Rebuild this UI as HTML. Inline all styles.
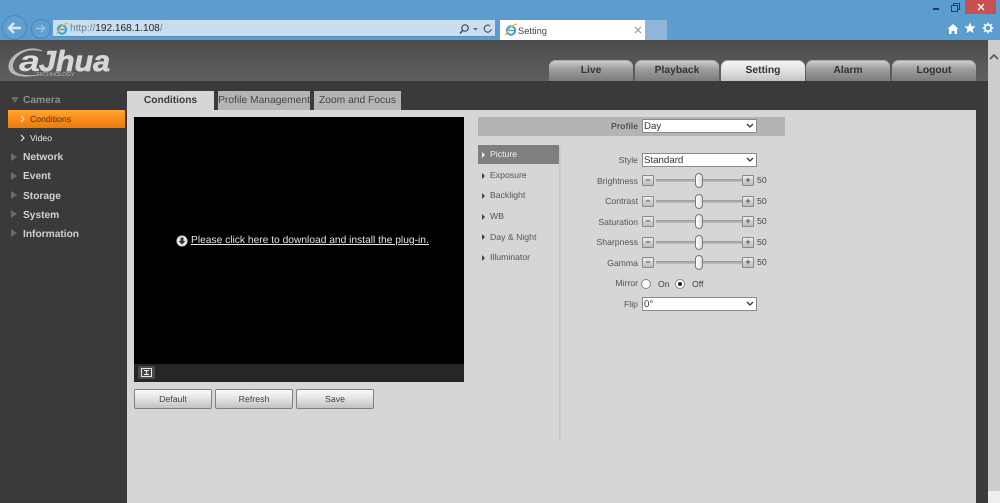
<!DOCTYPE html>
<html><head><meta charset="utf-8"><title>Setting</title>
<style>
html,body{margin:0;padding:0;width:1000px;height:503px;overflow:hidden;background:#3a3a3a}
body{position:relative;font-family:"Liberation Sans",sans-serif;font-size:10px;color:#444;text-rendering:geometricPrecision;filter:blur(.3px)}
div,span,a,svg{position:absolute}
.t{white-space:nowrap;line-height:12px}
.nt{background:linear-gradient(#d4d4d4,#a0a0a0 40%,#7c7c7c);border-radius:7px 7px 0 0;top:60px;height:21px;width:84px;text-align:center;font:bold 10.3px/22px "Liberation Sans",sans-serif;color:#333;box-shadow:inset 0 1px 0 #aaa}
.side{left:23px;font:bold 10.2px/12px "Liberation Sans",sans-serif;color:#d0d0d0;white-space:nowrap}
.arr{left:11px;width:0;height:0;border-left:6px solid #6a6a6a;border-top:4px solid transparent;border-bottom:4px solid transparent}
.tab{top:91px;height:19px;background:#b5b5b5;font:10.27px/20px "Liberation Sans",sans-serif;color:#444;text-align:center;white-space:nowrap;overflow:hidden}
.btn{top:389px;width:76px;height:18px;border:1px solid #808080;border-radius:2px;background:linear-gradient(#fafafa,#e8e8e8 40%,#c2c2c2);text-align:center;font:8.8px/18px "Liberation Sans",sans-serif;color:#444}
.m{left:490px;font:8.7px/12px "Liberation Sans",sans-serif;color:#555;white-space:nowrap}
.tri{left:482px;width:0;height:0;border-left:3px solid #444;border-top:3px solid transparent;border-bottom:3px solid transparent}
.lbl{right:362px;font:8.7px/12px "Liberation Sans",sans-serif;color:#555;white-space:nowrap;text-align:right}
.sel{left:642px;height:12px;background:#fff;border:1px solid #8a8a8a;font:9.7px/13px "Liberation Sans",sans-serif;color:#333;padding-left:1px;width:112px}
.sel svg{right:2px;top:3px}
.pm{width:10px;height:9px;border:1px solid #8a8a8a;border-radius:1px;background:linear-gradient(#eee,#bbb);font:bold 9px/8px "Liberation Sans",sans-serif;color:#555;text-align:center}
.track{left:656px;width:86px;height:3px;background:linear-gradient(#9a9a9a,#c0c0c0)}
.knob{left:695px;width:6px;height:13px;background:linear-gradient(90deg,#fff,#ddd);border:1px solid #777;border-radius:4px}
.v{left:757px;font:8.7px/12px "Liberation Sans",sans-serif;color:#444}
</style></head><body>
<!-- browser chrome -->
<div style="left:0;top:0;width:1000px;height:40px;background:#5c9dd0"></div>
<div style="left:2px;top:15px;width:23px;height:23px;border-radius:50%;border:1px solid #4a85b5;background:#5f9fd2"></div>
<svg style="left:6px;top:21px" width="16" height="14" viewBox="0 0 16 14"><path d="M15 7H3M8 2L3 7l5 5" fill="none" stroke="#dce9f4" stroke-width="2.4"/></svg>
<div style="left:31px;top:19px;width:18px;height:18px;border-radius:50%;border:1px solid #4a85b5;background:#5f9fd2"></div>
<svg style="left:35px;top:23px" width="11" height="11" viewBox="0 0 11 11"><path d="M1 5.500h8M6 2l3.500 3.500L6 9" fill="none" stroke="#a0c6e4" stroke-width="1.400"/></svg>
<div style="left:53px;top:20px;width:442px;height:16px;background:#c9def0;border-bottom:1px solid #4f8fc2"></div>
<svg style="left:55px;top:22px" width="14" height="14" viewBox="0 0 14 14"><circle cx="7" cy="7.500" r="4.200" fill="none" stroke="#3f9fdc" stroke-width="2"/><path d="M3 7.500h8" stroke="#3f9fdc" stroke-width="1.400"/><path d="M1.500 12.500C4 6 8 2 13 1" fill="none" stroke="#e8b93c" stroke-width="1.400"/></svg>
<div class="t" style="left:70px;top:23px;font-size:10.1px;color:#667"><span style="position:static;color:#6d7f8f">http://</span><span style="position:static;color:#222">192.168.1.108</span><span style="position:static;color:#6d7f8f">/</span></div>
<svg style="left:459px;top:23px" width="36" height="12" viewBox="0 0 36 12"><circle cx="6" cy="5" r="3.200" fill="none" stroke="#445" stroke-width="1.200"/><path d="M3.500 7.500L1 10.500" stroke="#445" stroke-width="1.400"/><path d="M14 5h5l-2.500 2.500z" fill="#667"/><path d="M31 3a3.500 3.500 0 1 0 1.200 3" fill="none" stroke="#556" stroke-width="1.200"/></svg>
<div style="left:500px;top:20px;width:145px;height:20px;background:#fff"></div>
<svg style="left:504px;top:23px" width="14" height="14" viewBox="0 0 14 14"><circle cx="7" cy="7.500" r="4.200" fill="none" stroke="#3f9fdc" stroke-width="2"/><path d="M3 7.500h8" stroke="#3f9fdc" stroke-width="1.400"/><path d="M1.500 12.500C4 6 8 2 13 1" fill="none" stroke="#e8b93c" stroke-width="1.400"/></svg>
<div class="t" style="left:518px;top:25px;font-size:9.3px;color:#444">Setting</div>
<svg style="left:634px;top:26px" width="8" height="8" viewBox="0 0 8 8"><path d="M1 1l6 6M7 1L1 7" stroke="#999" stroke-width="1.200"/></svg>
<div style="left:645px;top:20px;width:22px;height:20px;background:#8fb6d6"></div>
<div style="left:933px;top:8px;width:6px;height:2px;background:#2d3e4e"></div>
<svg style="left:951px;top:3px" width="9" height="9" viewBox="0 0 9 9"><rect x=".5" y="2.500" width="6" height="6" fill="none" stroke="#2d3e4e"/><path d="M2.500 2V.5h6v6H7" fill="none" stroke="#2d3e4e"/></svg>
<div style="left:965px;top:0;width:31px;height:14px;background:#c75050"></div>
<svg style="left:977px;top:3px" width="8" height="8" viewBox="0 0 8 8"><path d="M1 1l6 6M7 1L1 7" stroke="#fff" stroke-width="1.300"/></svg>
<svg style="left:947px;top:23px" width="12" height="12" viewBox="0 0 12 12"><path d="M6 1L.5 6H2v5h2.500V8h3v3H10V6h1.500z" fill="#fff"/></svg>
<svg style="left:964px;top:22px" width="12" height="12" viewBox="0 0 12 12"><path d="M6 .5l1.600 3.700 4 .3-3 2.600.9 3.900L6 8.900 2.500 11l.9-3.900-3-2.600 4-.3z" fill="#fff"/></svg>
<svg style="left:982px;top:22px" width="12" height="12" viewBox="0 0 12 12"><circle cx="6" cy="6" r="3.200" fill="none" stroke="#fff" stroke-width="1.600"/><path d="M6 .5v2M6 9.500v2M.5 6h2M9.500 6h2M2.100 2.100l1.400 1.400M8.500 8.500l1.400 1.400M9.900 2.100L8.500 3.500M3.500 8.500L2.100 9.900" stroke="#fff" stroke-width="1.400"/></svg>

<!-- header -->
<div style="left:0;top:40px;width:988px;height:41px;background:linear-gradient(#4c4c4c,#5f5f5f)"></div>
<svg style="left:6px;top:44px" width="110" height="36" viewBox="0 0 110 36">
<path d="M36 6.500C33 5 28 4 24 4.500 12 6 3 14 2.500 22 2 29 9 32 17 32.500c7 .4 14-.5 20-2.500-6 1-12 1.500-17 1-7-.6-13-3-13-9 0-7 8-14.500 17-15.500 4-.4 9 0 12 1z" fill="#b8b8b8"/>
<text x="13" y="27" font-family="Liberation Sans" font-size="29" font-weight="bold" font-style="italic" fill="#dedede" textLength="21" lengthAdjust="spacingAndGlyphs">a</text>
<text x="33" y="27" font-family="Liberation Sans" font-size="29" font-weight="bold" font-style="italic" fill="#d6d6d6" stroke="#d6d6d6" stroke-width=".7" textLength="71" lengthAdjust="spacingAndGlyphs">Jhua</text>
</svg>
<div class="t" style="left:36px;top:72px;font-size:5.5px;line-height:7px;color:#b8b8b8">TECHNOLOGY</div>
<div class="nt" style="left:549px">Live</div>
<div class="nt" style="left:635px">Playback</div>
<div class="nt" style="left:721px;background:linear-gradient(#f8f8f8,#dcdcdc 60%,#c4c4c4)">Setting</div>
<div class="nt" style="left:806px">Alarm</div>
<div class="nt" style="left:892px">Logout</div>

<!-- scrollbar -->
<div style="left:988px;top:40px;width:12px;height:451px;background:#cdcdcd"></div>
<div style="left:988px;top:491px;width:12px;height:12px;background:#eeeeee"></div>
<svg style="left:989px;top:53px" width="10" height="7" viewBox="0 0 10 7"><path d="M1 6l4-4 4 4" fill="none" stroke="#555" stroke-width="1.600"/></svg>

<!-- sidebar -->
<div style="left:11px;top:97px;width:0;height:0;border-top:6px solid #6a6a6a;border-left:4px solid transparent;border-right:4px solid transparent"></div>
<div class="side" style="top:95px;color:#8f8f8f">Camera</div>
<div style="left:8px;top:110px;width:117px;height:18px;background:linear-gradient(#ffa63a,#f98a14 55%,#e87d10)"></div>
<svg style="left:20px;top:115px" width="6" height="8" viewBox="0 0 6 8"><path d="M1 1l3 3-3 3" fill="none" stroke="#fff0d8" stroke-width="1.100"/></svg>
<div class="t" style="left:30px;top:113px;font-size:8.7px;color:#4a3320">Conditions</div>
<svg style="left:20px;top:134px" width="6" height="8" viewBox="0 0 6 8"><path d="M1 1l3 3-3 3" fill="none" stroke="#eee" stroke-width="1.100"/></svg>
<div class="t" style="left:30px;top:132px;font-size:8.7px;color:#e6e6e6">Video</div>
<div class="arr" style="top:153px"></div><div class="side" style="top:152px">Network</div>
<div class="arr" style="top:172px"></div><div class="side" style="top:171px">Event</div>
<div class="arr" style="top:191px"></div><div class="side" style="top:191px">Storage</div>
<div class="arr" style="top:210px"></div><div class="side" style="top:210px">System</div>
<div class="arr" style="top:229px"></div><div class="side" style="top:229px">Information</div>

<!-- tabs -->
<div class="tab" style="left:127px;width:87px;background:#d6d6d6;font-weight:bold;font-size:10.2px;color:#3c3c3c">Conditions</div>
<div class="tab" style="left:218px;width:92px">Profile Management</div>
<div class="tab" style="left:314px;width:87px">Zoom and Focus</div>

<!-- content -->
<div style="left:127px;top:110px;width:849px;height:393px;background:#d6d6d6"></div>
<div style="left:134px;top:117px;width:330px;height:247px;background:#000"></div>
<div style="left:134px;top:364px;width:330px;height:18px;background:#262626"></div>
<div style="left:138px;top:366px;width:17px;height:13px;background:#4a4a4a;border-radius:1px"></div>
<svg style="left:141px;top:368px" width="11" height="9" viewBox="0 0 11 9"><rect x=".5" y=".5" width="10" height="8" fill="none" stroke="#e8e8e8"/><path d="M3 2.500h5M3 6.500h5M5.500 2v5" stroke="#e8e8e8"/></svg>
<svg style="left:176px;top:235px" width="12" height="12" viewBox="0 0 12 12"><circle cx="6" cy="6" r="5.500" fill="#e4e4e4"/><path d="M4.500 2.500h3V6h2L6 9.500 2.500 6h2z" fill="#333"/></svg>
<div class="t" style="left:191px;top:235px;font-size:10.24px;color:#e4e4e4;text-decoration:underline">Please click here to download and install the plug-in.</div>

<div class="btn" style="left:134px">Default</div>
<div class="btn" style="left:215px">Refresh</div>
<div class="btn" style="left:296px">Save</div>

<!-- right panel -->
<div style="left:478px;top:117px;width:307px;height:19px;background:#b4b4b4"></div>
<div class="t" style="left:611px;top:120px;font-weight:bold;font-size:8.7px;color:#555">Profile</div>
<div class="sel" style="top:119px">Day<svg width="8" height="6" viewBox="0 0 8 6"><path d="M1 1l3 3 3-3" fill="none" stroke="#333" stroke-width="1.300"/></svg></div>

<div style="left:559px;top:145px;width:3px;height:295px;background:linear-gradient(90deg,#c6c6c6,#d6d6d6)"></div>
<div style="left:478px;top:145px;width:81px;height:19px;background:#7f7f7f"></div>
<div class="tri" style="left:482px;top:152px;border-left-color:#eee"></div><div class="m" style="top:148px;color:#efefef">Picture</div>
<div class="tri" style="top:173px"></div><div class="m" style="top:169px">Exposure</div>
<div class="tri" style="top:193px"></div><div class="m" style="top:189px">Backlight</div>
<div class="tri" style="top:214px"></div><div class="m" style="top:210px">WB</div>
<div class="tri" style="top:234px"></div><div class="m" style="top:231px">Day &amp; Night</div>
<div class="tri" style="top:255px"></div><div class="m" style="top:251px">Illuminator</div>

<div class="lbl" style="top:154px">Style</div>
<div class="sel" style="top:153px">Standard<svg width="8" height="6" viewBox="0 0 8 6"><path d="M1 1l3 3 3-3" fill="none" stroke="#333" stroke-width="1.300"/></svg></div>

<div class="lbl" style="top:175px">Brightness</div><div class="pm" style="left:642px;top:175px">−</div><div class="track" style="top:179px"></div><div class="knob" style="top:173px"></div><div class="pm" style="left:742px;top:175px">+</div><div class="v" style="top:174px">50</div>
<div class="lbl" style="top:195px">Contrast</div><div class="pm" style="left:642px;top:196px">−</div><div class="track" style="top:200px"></div><div class="knob" style="top:194px"></div><div class="pm" style="left:742px;top:196px">+</div><div class="v" style="top:195px">50</div>
<div class="lbl" style="top:216px">Saturation</div><div class="pm" style="left:642px;top:216px">−</div><div class="track" style="top:220px"></div><div class="knob" style="top:214px"></div><div class="pm" style="left:742px;top:216px">+</div><div class="v" style="top:215px">50</div>
<div class="lbl" style="top:236px">Sharpness</div><div class="pm" style="left:642px;top:237px">−</div><div class="track" style="top:241px"></div><div class="knob" style="top:235px"></div><div class="pm" style="left:742px;top:237px">+</div><div class="v" style="top:236px">50</div>
<div class="lbl" style="top:257px">Gamma</div><div class="pm" style="left:642px;top:257px">−</div><div class="track" style="top:261px"></div><div class="knob" style="top:255px"></div><div class="pm" style="left:742px;top:257px">+</div><div class="v" style="top:256px">50</div>

<div class="lbl" style="top:277px">Mirror</div>
<div style="left:641px;top:279px;width:8px;height:8px;border:1px solid #888;border-radius:50%;background:#fff"></div>
<div class="t" style="left:658px;top:278px;font-size:8.7px;color:#444">On</div>
<div style="left:675px;top:279px;width:8px;height:8px;border:1px solid #888;border-radius:50%;background:#fff"></div>
<div style="left:678px;top:282px;width:4px;height:4px;border-radius:50%;background:#222"></div>
<div class="t" style="left:692px;top:278px;font-size:8.7px;color:#444">Off</div>

<div class="lbl" style="top:298px">Flip</div>
<div class="sel" style="top:297px">0°<svg width="8" height="6" viewBox="0 0 8 6"><path d="M1 1l3 3 3-3" fill="none" stroke="#333" stroke-width="1.300"/></svg></div>
</body></html>
